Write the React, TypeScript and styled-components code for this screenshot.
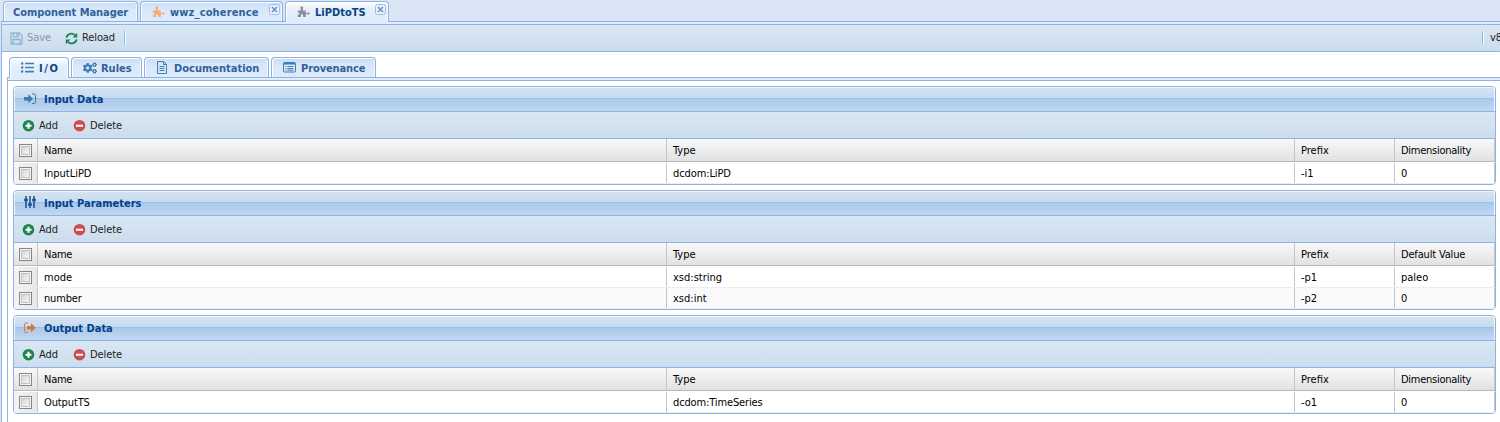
import React from "react";
import styled, { createGlobalStyle, css } from "styled-components";
import { FaListUl, FaCogs } from "react-icons/fa";

const Global = createGlobalStyle`
  *, *::before, *::after { box-sizing: border-box; }
  body { margin: 0; overflow: hidden; background: #fff; }
`;

const line = "#8db2e3";

const Page = styled.div`
  display: flex;
  height: 100vh;
  overflow: hidden;
  padding-left: 1px;
  background: #dae6f4;
  font-family: "DejaVu Sans Condensed", "DejaVu Sans", sans-serif;
  font-stretch: condensed;
  font-size: 11px;
  line-height: 14px;
  white-space: nowrap;
`;

const Workspace = styled.div`
  display: flex;
  flex-direction: column;
  flex: 1;
  min-width: 0;
`;

const TabStrip = styled.div<{ $inner?: boolean }>`
  display: flex;
  gap: 2px;
  flex: none;
  height: ${(p) => (p.$inner ? 20 : 21)}px;
  padding: ${(p) => (p.$inner ? "0 0 0 2px" : "1px 0 0 2px")};
  background: ${(p) => (p.$inner ? "#fff" : "#dae6f5")};
`;

const TabItem = styled.div<{ $w: number; $active?: boolean; $pad: number }>`
  position: relative;
  display: flex;
  align-items: center;
  flex: none;
  width: ${(p) => p.$w}px;
  height: ${(p) => (p.$active ? 21 : 20)}px;
  padding: 2px 0 ${(p) => (p.$active ? 1 : 0)}px ${(p) => p.$pad}px;
  border: 1px solid ${line};
  border-bottom: 0;
  border-radius: 4px 4px 0 0;
  box-shadow: inset 1px 1px 0 #fff, inset -1px 0 0 #f2f7fd;
  background: linear-gradient(#c9ddf6, #dae8fa 45%, #deebfb);
  color: #2f6299;
  font-weight: bold;
  ${(p) =>
    p.$active &&
    css`
      z-index: 1;
      background: linear-gradient(#fff, #e4effc 40%, #deecfd);
      color: #0c4380;
    `}
`;

const TabIcon = styled.span<{ $w: number; $color?: string }>`
  display: flex;
  flex: none;
  width: ${(p) => p.$w}px;
  margin-bottom: 2px;
  color: ${(p) => p.$color ?? "#3f7fb3"};
`;

const Label = styled.span<{ $ls?: number }>`
  letter-spacing: ${(p) => p.$ls ?? 0}px;
`;

const CloseMark = styled.svg`
  position: absolute;
  top: 2px;
  right: 2px;
`;

const Rail = styled.div`
  flex: none;
  height: 4px;
  border: 1px solid ${line};
  border-right: 0;
  background: #deecfd;
`;

const Body = styled.div`
  display: flex;
  flex-direction: column;
  flex: 1;
  min-height: 0;
  border-left: 1px solid ${line};
  background: #fff;
`;

const Bar = styled.div<{ $main?: boolean }>`
  display: flex;
  align-items: center;
  flex: none;
  height: 27px;
  padding-left: 8px;
  border-bottom: 1px solid ${line};
  background: linear-gradient(#dae7f3, #cbddee);
  color: #222;
  ${Label} {
    margin-top: ${(p) => (p.$main ? 0 : 1)}px;
    letter-spacing: -0.1px;
  }
`;

const BarButton = styled.div<{ $w: number; $off?: boolean }>`
  display: flex;
  align-items: center;
  gap: 4px;
  flex: none;
  width: ${(p) => p.$w}px;
  opacity: ${(p) => (p.$off ? 0.4 : 1)};
  svg { flex: none; }
`;

const Divider = styled.i`
  flex: none;
  width: 2px;
  height: 14px;
  border-left: 1px solid #86b9f5;
  background: #fff;
`;

const Version = styled.div`
  display: flex;
  align-items: center;
  gap: 6px;
  width: 18px;
  margin-left: auto;
  overflow: hidden;
  span { flex: none; }
`;

const Inner = styled.div`
  display: flex;
  flex-direction: column;
  flex: 1;
  padding: 5px 0 0 5px;
  min-height: 0;
`;

const Panels = styled.div`
  display: flex;
  flex-direction: column;
  flex: 1;
  gap: 5px;
  padding: 5px 4px 0 5px;
  border-left: 1px solid ${line};
`;

const Panel = styled.section`
  flex: none;
  overflow: hidden;
  border: 1px solid ${line};
  border-radius: 4px;
`;

const PanelTitle = styled.header`
  display: flex;
  align-items: center;
  height: 25px;
  padding: 1px 0 0 10px;
  border-bottom: 1px solid ${line};
  border-radius: 3px 3px 0 0;
  box-shadow: inset 1px 1px 0 #f1f6fc, inset -1px 0 0 #f1f6fc;
  background: linear-gradient(#d6e3f3, #c6dbef 11px, #9cc0ea 11px, #9cc0ea 12px, #aac8ea 12px, #c1d8f1);
  color: #04408c;
  font-weight: bold;
`;

const columns = "24px 629px 628px 100px 100px";

const HeadRow = styled.div`
  display: grid;
  grid-template-columns: ${columns};
  height: 23px;
  border-bottom: 1px solid #b9b9b9;
  background: linear-gradient(#f9f9f9, #e0e1e3);
`;

const Rows = styled.div`
  padding-top: 1px;
`;

const Row = styled.div<{ $alt?: boolean }>`
  display: grid;
  grid-template-columns: ${columns};
  height: 21px;
  border-bottom: 1px solid #ededed;
  background: ${(p) => (p.$alt ? "#fafafa" : "#fff")};
`;

const Cell = styled.div<{ $check?: boolean }>`
  display: flex;
  align-items: center;
  padding-left: ${(p) => (p.$check ? 5 : 6)}px;
  border-right: 1px solid #c5c5c5;
  color: #000;
  ${Label} { margin-top: 2px; }
  ${Row} & {
    background: ${(p) => (p.$check ? "linear-gradient(90deg, #f4f4f4, #e8e8e8)" : "none")};
  }
`;

const Checkbox = styled.i`
  width: 13px;
  height: 13px;
  border: 1px solid #858585;
  box-shadow: inset 0 0 0 1px #f6f6f6, inset 0 0 0 2px #c3c3c3;
  background: linear-gradient(135deg, #c6ccd6, #fff);
`;

const PuzzleIcon = () => (
  <svg width="13" height="12" viewBox="0 0 13 12" fill="currentColor">
    <path d="M.8 4.4h3V2.9C3.5 2.6 3.3 2.2 3.3 1.8 3.3 1 4 .4 4.8.4s1.5.6 1.5 1.4c0 .4-.2.8-.5 1.1v1.5h3v2.5h1.6c.2-.4.6-.6 1-.6.7 0 1.2.5 1.2 1.2s-.5 1.2-1.2 1.2c-.4 0-.8-.2-1-.6H8.8V11H6.1V9.5c0-.7-.5-1.2-1.1-1.2s-1.1.5-1.1 1.2V11H.8V8.9c.8 0 1.4-.5 1.4-1.2S1.600 6.500.8 6.500z" />
  </svg>
);

const SaveIcon = () => (
  <svg width="13" height="13" viewBox="0 0 13 13" fill="none" stroke="#2f75ae" strokeWidth="1.3">
    <path d="M1 1h8.500L12 3.500V12H1zM3.500 1v3.800h5V1M3 12V7.500h7V12M6.800 1.800v2" />
  </svg>
);

const ReloadIcon = () => (
  <svg width="13" height="13" viewBox="0 0 13 13" fill="none" stroke="#1f8450" strokeWidth="1.8">
    <path d="M1.4 5.7A5 5 0 0 1 10 3.2M11.6 7.3A5 5 0 0 1 3 9.8" />
    <path d="M12.2.8v4.6H7.6zM.8 12.2V7.6h4.6z" fill="#1f8450" stroke="none" />
  </svg>
);

const BulletsIcon = styled(FaListUl)`
  width: 13px;
  height: 13px;
`;

const DocIcon = () => (
  <svg width="12" height="13" viewBox="0 0 12 13" fill="none" stroke="currentColor">
    <path d="M1.5.5h6l3 3v9h-9zM7.500.5v3h3M3.500 5.500h5M3.500 7.500h5M3.500 9.500h5" />
  </svg>
);

const ListIcon = () => (
  <svg width="13" height="11" viewBox="0 0 13 11" fill="none" stroke="currentColor">
    <rect x=".5" y=".5" width="12" height="9.5" rx="1" />
    <path d="M1 1.5h11" strokeWidth="2" />
    <path d="M2.5 4.5h1M4.5 4.5h6M2.5 6.5h1M4.5 6.5h6M2.5 8.2h1M4.5 8.2h6" />
  </svg>
);

const EnterIcon = () => (
  <svg width="14" height="12" viewBox="0 0 14 12" fill="#3a7db1">
    <path d="M0 4h4.300V1.200L9 5.700l-4.700 4.500V7.500H0z" />
    <path d="M8 1h2.200c.8 0 1.300.5 1.300 1.300v6.900c0 .8-.5 1.300-1.300 1.300H8" fill="none" stroke="#3a7db1" />
  </svg>
);

const LeaveIcon = () => (
  <svg width="14" height="12" viewBox="0 0 14 12" fill="#d07a38">
    <path d="M3 4h4V1.200l4.700 4.600L7 10.400V7.600H3z" />
    <path d="M4 1H1.800C1 1 .5 1.500.5 2.300v7c0 .8.5 1.200 1.300 1.200H4" fill="none" stroke="#d07a38" />
  </svg>
);

const SlidersIcon = () => (
  <svg width="14" height="13" viewBox="0 0 14 13" fill="none" stroke="#14508f">
    <path d="M2 0v12M6 0v12M10 0v12" strokeWidth="1.5" />
    <path d="M.2 4h3.600M4.200 8.500h3.600M8.200 4h3.600" strokeWidth="2.300" />
  </svg>
);

const RoundIcon = ({ minus }: { minus?: boolean }) => (
  <svg width="13" height="13" viewBox="0 0 13 13">
    <circle cx="6.5" cy="6.7" r="5.8" fill={minus ? "#cf4b51" : "#1f8450"} />
    <path d={minus ? "M3 6.7h7" : "M3.5 6.7h6M6.5 3.7v6"} stroke="#fff" strokeWidth="2" />
  </svg>
);

const Close = () => (
  <CloseMark width="11" height="11" viewBox="0 0 11 11">
    <rect x=".5" y=".5" width="10" height="10" rx="2" fill="#e9f2fd" stroke="#9dbde5" />
    <path d="M3 3l5 5M8 3L3 8" stroke="#6d94c4" strokeWidth="1.7" />
  </CloseMark>
);

type PanelData = {
  title: string;
  icon: React.ReactNode;
  last: string;
  rows: string[][];
};

const panels: PanelData[] = [
  { title: "Input Data", icon: <EnterIcon />, last: "Dimensionality", rows: [["InputLiPD", "dcdom:LiPD", "-i1", "0"]] },
  {
    title: "Input Parameters",
    icon: <SlidersIcon />,
    last: "Default Value",
    rows: [
      ["mode", "xsd:string", "-p1", "paleo"],
      ["number", "xsd:int", "-p2", "0"],
    ],
  },
  { title: "Output Data", icon: <LeaveIcon />, last: "Dimensionality", rows: [["OutputTS", "dcdom:TimeSeries", "-o1", "0"]] },
];

const tracking: Record<string, number> = {
  Dimensionality: -0.27,
  "Default Value": -0.17,
  Name: -0.25,
  number: -0.17,
  "dcdom:TimeSeries": -0.13,
  "dcdom:LiPD": -0.1,
  OutputTS: -0.12,
};

const GridPanel = ({ title, icon, last, rows }: PanelData) => (
  <Panel>
    <PanelTitle>
      <TabIcon $w={20}>{icon}</TabIcon>
      <Label>{title}</Label>
    </PanelTitle>
    <Bar>
      <BarButton $w={51}><RoundIcon /><Label>Add</Label></BarButton>
      <BarButton $w={60}><RoundIcon minus /><Label>Delete</Label></BarButton>
    </Bar>
    <HeadRow>
      <Cell $check><Checkbox /></Cell>
      {["Name", "Type", "Prefix", last].map((h) => (
        <Cell key={h}><Label $ls={tracking[h]}>{h}</Label></Cell>
      ))}
    </HeadRow>
    <Rows>
      {rows.map((r, i) => (
        <Row key={r[0]} $alt={i % 2 === 1}>
          <Cell $check><Checkbox /></Cell>
          {r.map((c, j) => (
            <Cell key={j}><Label $ls={tracking[c]}>{c}</Label></Cell>
          ))}
        </Row>
      ))}
    </Rows>
  </Panel>
);

export default function App() {
  return (
    <Page>
      <Global />
      <Workspace>
        <TabStrip>
          <TabItem $w={135} $pad={9}><Label $ls={-0.06}>Component Manager</Label></TabItem>
          <TabItem $w={143} $pad={11}>
            <TabIcon $w={18} $color="#f3ad78"><PuzzleIcon /></TabIcon>
            <Label $ls={0.16}>wwz_coherence</Label>
            <Close />
          </TabItem>
          <TabItem $w={104} $pad={11} $active>
            <TabIcon $w={18} $color="#8d8f92"><PuzzleIcon /></TabIcon>
            <Label>LiPDtoTS</Label>
            <Close />
          </TabItem>
        </TabStrip>
        <Rail />
        <Body>
          <Bar $main>
            <BarButton $w={55} $off><SaveIcon /><Label>Save</Label></BarButton>
            <BarButton $w={59}><ReloadIcon /><Label>Reload</Label></BarButton>
            <Divider />
            <Version><Divider /><span>v8</span></Version>
          </Bar>
          <Inner>
            <TabStrip $inner>
              <TabItem $w={60} $pad={11} $active>
                <TabIcon $w={18}><BulletsIcon /></TabIcon><Label $ls={1.6}>I/O</Label>
              </TabItem>
              <TabItem $w={71} $pad={11}>
                <TabIcon $w={18}><FaCogs size={14} /></TabIcon><Label>Rules</Label>
              </TabItem>
              <TabItem $w={125} $pad={11}>
                <TabIcon $w={18}><DocIcon /></TabIcon><Label>Documentation</Label>
              </TabItem>
              <TabItem $w={105} $pad={11}>
                <TabIcon $w={18}><ListIcon /></TabIcon><Label $ls={-0.1}>Provenance</Label>
              </TabItem>
            </TabStrip>
            <Rail />
            <Panels>
              {panels.map((p) => <GridPanel key={p.title} {...p} />)}
            </Panels>
          </Inner>
        </Body>
      </Workspace>
    </Page>
  );
}
